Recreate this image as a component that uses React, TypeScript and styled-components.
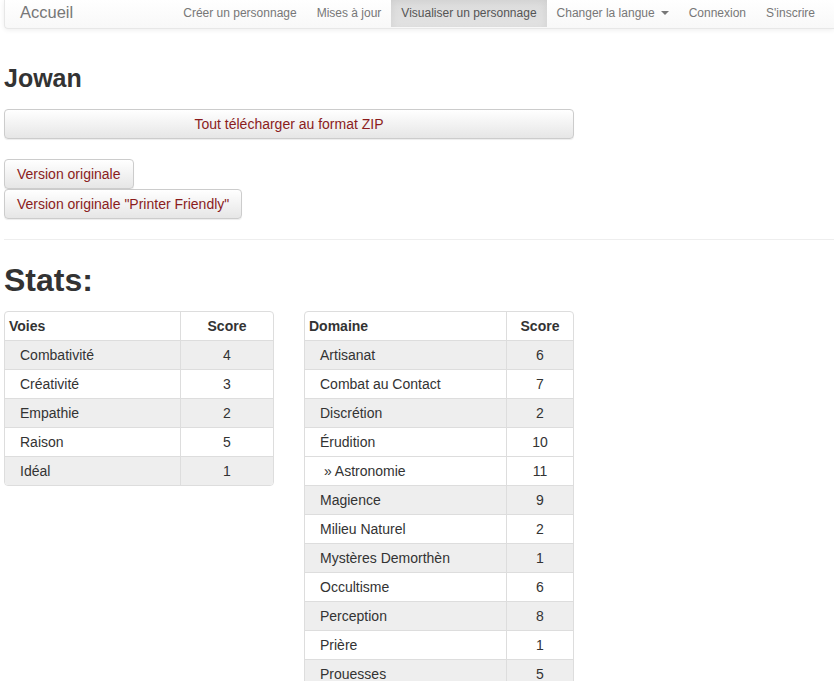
import React from "react";
import styled, { createGlobalStyle } from "styled-components";

const Global = createGlobalStyle`
  html, body { margin: 0; padding: 0; background: #fff; }
  body {
    font-family: "Liberation Sans", Arial, sans-serif;
    font-size: 14px;
    line-height: 20px;
    color: #333;
  }
`;

const Page = styled.div`
  padding: 0 0 0 4px;
`;

const Navbar = styled.nav`
  display: flex;
  align-items: stretch;
  height: 28px;
  background: linear-gradient(to bottom, #fff 0%, #f8f8f8 100%);
  border: 1px solid #e7e7e7;
  border-top: none;
  border-right: none;
  border-radius: 0 0 0 4px;
  box-shadow: inset 0 1px 0 rgba(255,255,255,.15), 0 1px 5px rgba(0,0,0,.075);
`;

const Brand = styled.a`
  display: flex;
  align-items: center;
  padding: 0 14px 0 15px;
  font-size: 16.5px;
  color: #777;
  text-decoration: none;
  margin-top: -5px;
`;

const NavList = styled.ul`
  display: flex;
  list-style: none;
  margin: 0 0 0 auto;
  padding: 0 9px 0 0;
`;

const NavItem = styled.li<{ $active?: boolean }>`
  display: flex;
  align-items: center;
  padding: 0 10px;
  margin-top: -3px;
  font-size: 12px;
  color: ${(p) => (p.$active ? "#555" : "#777")};
  background: ${(p) =>
    p.$active ? "linear-gradient(to bottom, #dbdbdb 0%, #e2e2e2 100%)" : "transparent"};
  box-shadow: ${(p) => (p.$active ? "inset 0 3px 9px rgba(0,0,0,.075)" : "none")};
  margin-bottom: ${(p) => (p.$active ? "1px" : "0")};
  padding-top: 1px;
`;

const Caret = styled.span`
  display: inline-block;
  width: 0;
  height: 0;
  margin-left: 6px;
  border-top: 4px solid #777;
  border-left: 4px solid transparent;
  border-right: 4px solid transparent;
  vertical-align: middle;
`;

const Title = styled.h2`
  font-size: 25px;
  font-weight: bold;
  line-height: 28px;
  margin: 35px 0 0 0;
  color: #333;
`;

const Button = styled.button<{ $block?: boolean }>`
  display: block;
  width: ${(p) => (p.$block ? "570px" : "auto")};
  font-family: "Liberation Sans", Arial, sans-serif;
  font-size: 14px;
  line-height: 20px;
  padding: 4px 12px;
  color: #8b1c1c;
  background: linear-gradient(to bottom, #fff 0%, #e6e6e6 100%);
  border: 1px solid #ccc;
  border-radius: 4px;
  box-shadow: inset 0 1px 0 rgba(255,255,255,.15), 0 1px 1px rgba(0,0,0,.075);
  text-align: center;
`;

const ZipWrap = styled.div`
  margin-top: 17px;
`;

const VersionGroup = styled.div`
  margin-top: 20px;
  display: flex;
  flex-direction: column;
  align-items: flex-start;
`;

const Rule = styled.hr`
  border: 0;
  border-top: 1px solid #eee;
  margin: 20px 0 0 0;
`;

const StatsTitle = styled.h1`
  font-size: 32px;
  font-weight: bold;
  line-height: 40px;
  margin: 20px 0 0 0;
  color: #333;
`;

const Tables = styled.div`
  display: grid;
  grid-template-columns: 270px 270px;
  column-gap: 30px;
  align-items: start;
  margin-top: 11px;
`;

const TableBox = styled.div`
  border: 1px solid #ddd;
  border-radius: 4px;
  overflow: hidden;
`;

const Table = styled.table`
  width: 100%;
  table-layout: fixed;
  border-collapse: collapse;
`;

const Th = styled.th<{ $center?: boolean; $w?: number }>`
  ${(p) => (p.$w ? `width: ${p.$w}px;` : "")}
  text-align: ${(p) => (p.$center ? "center" : "left")};
  font-weight: bold;
  padding: 4px;
  border-left: ${(p) => (p.$center ? "1px solid #ddd" : "none")};
  border-bottom: 1px solid #ddd;
`;

const Row = styled.tr<{ $striped: boolean }>`
  background: ${(p) => (p.$striped ? "#eee" : "#fff")};
`;

const Td = styled.td<{ $center?: boolean }>`
  text-align: ${(p) => (p.$center ? "center" : "left")};
  padding: 4px 4px 4px ${(p) => (p.$center ? "4px" : "15px")};
  border-left: ${(p) => (p.$center ? "1px solid #ddd" : "none")};
  border-top: 1px solid #ddd;
  white-space: nowrap;
`;

type Stat = { name: string; score: number; sub?: boolean };

const voies: Stat[] = [
  { name: "Combativité", score: 4 },
  { name: "Créativité", score: 3 },
  { name: "Empathie", score: 2 },
  { name: "Raison", score: 5 },
  { name: "Idéal", score: 1 },
];

const domaines: Stat[] = [
  { name: "Artisanat", score: 6 },
  { name: "Combat au Contact", score: 7 },
  { name: "Discrétion", score: 2 },
  { name: "Érudition", score: 10 },
  { name: "\u00a0» Astronomie", score: 11, sub: true },
  { name: "Magience", score: 9 },
  { name: "Milieu Naturel", score: 2 },
  { name: "Mystères Demorthèn", score: 1 },
  { name: "Occultisme", score: 6 },
  { name: "Perception", score: 8 },
  { name: "Prière", score: 1 },
  { name: "Prouesses", score: 5 },
];

function StatTable({ head, rows, w1 }: { head: string; rows: Stat[]; w1: number }) {
  let idx = -1;
  return (
    <TableBox>
      <Table>
        <thead>
          <tr>
            <Th $w={w1}>{head}</Th>
            <Th $center>Score</Th>
          </tr>
        </thead>
        <tbody>
          {rows.map((r) => {
            if (!r.sub) idx += 1;
            const striped = !r.sub && idx % 2 === 0;
            return (
              <Row key={r.name} $striped={striped}>
                <Td>{r.name}</Td>
                <Td $center>{r.score}</Td>
              </Row>
            );
          })}
        </tbody>
      </Table>
    </TableBox>
  );
}

export default function App() {
  return (
    <>
      <Global />
      <Page>
        <Navbar>
          <Brand href="#">Accueil</Brand>
          <NavList>
            <NavItem>Créer un personnage</NavItem>
            <NavItem>Mises à jour</NavItem>
            <NavItem $active>Visualiser un personnage</NavItem>
            <NavItem>
              Changer la langue <Caret />
            </NavItem>
            <NavItem>Connexion</NavItem>
            <NavItem>S'inscrire</NavItem>
          </NavList>
        </Navbar>
        <Title>Jowan</Title>
        <ZipWrap>
          <Button $block>Tout télécharger au format ZIP</Button>
        </ZipWrap>
        <VersionGroup>
          <Button>Version originale</Button>
          <Button>Version originale "Printer Friendly"</Button>
        </VersionGroup>
        <Rule />
        <StatsTitle>Stats:</StatsTitle>
        <Tables>
          <StatTable head="Voies" rows={voies} w1={167} />
          <StatTable head="Domaine" rows={domaines} w1={193} />
        </Tables>
      </Page>
    </>
  );
}
